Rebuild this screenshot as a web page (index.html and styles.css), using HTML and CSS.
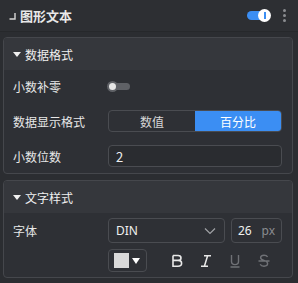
FILE: index.html
```html
<!DOCTYPE html>
<html>
<head>
<meta charset="utf-8">
<link rel="stylesheet" href="styles.css">
</head>
<body>
<div class="page">
  <div class="top">
    <svg class="corner" width="7" height="7" viewBox="0 0 7 7"><path d="M0.5 6 H6 V0" fill="none" stroke="#d8d8d8" stroke-width="1.4"/></svg>
    <span class="title">图形文本</span>
    <span class="spacer"></span>
    <span class="switch-on"><span class="knob"></span></span>
    <span class="dots"><i></i><i></i><i></i></span>
  </div>
  <div class="cards">
    <div class="card">
      <div class="card-head"><span class="caret"></span>数据格式</div>
      <div class="card-body">
        <div class="row">
          <span class="label">小数补零</span>
          <span class="switch-off"><span class="knob"></span></span>
        </div>
        <div class="row">
          <span class="label">数据显示格式</span>
          <div class="seg"><span class="seg-item">数值</span><span class="seg-item active">百分比</span></div>
        </div>
        <div class="row">
          <span class="label">小数位数</span>
          <div class="input">2</div>
        </div>
      </div>
    </div>
    <div class="card">
      <div class="card-head"><span class="caret"></span>文字样式</div>
      <div class="card-body body2">
        <div class="row row-font">
          <span class="label">字体</span>
          <div class="controls">
            <div class="select"><span>DIN</span>
              <svg width="12" height="8" viewBox="0 0 12 8"><path d="M1 1.5 L6 6.5 L11 1.5" fill="none" stroke="#a0a2a6" stroke-width="1.2"/></svg>
            </div>
            <div class="size"><span>26</span><span class="unit">px</span></div>
          </div>
        </div>
        <div class="row row-style">
          <span class="label"></span>
          <div class="controls">
            <div class="color"><span class="swatch"></span><span class="tri"></span></div>
            <div class="fmt">
              <svg width="14" height="16" viewBox="0 0 14 16"><path d="M3 2.5 H8 C10.3 2.5 11 3.6 11 5 C11 6.4 10 7.4 8 7.4 H3 M8 7.4 C10.6 7.4 11.6 8.6 11.6 10.3 C11.6 12 10.4 13.3 8 13.3 H3 V2.5" fill="none" stroke="#e8e8e8" stroke-width="1.6"/></svg>
              <svg width="14" height="16" viewBox="0 0 14 16"><path d="M5 2.8 H12 M2 13.2 H9 M8.6 2.8 L5.4 13.2" fill="none" stroke="#e8e8e8" stroke-width="1.5"/></svg>
              <svg width="14" height="16" viewBox="0 0 14 16"><path d="M3.5 2 V8.5 C3.5 10.6 5 11.6 7 11.6 C9 11.6 10.5 10.6 10.5 8.5 V2 M2.5 14 H11.5" fill="none" stroke="#6f7176" stroke-width="1.4"/></svg>
              <svg width="14" height="16" viewBox="0 0 14 16"><path d="M10.6 4 C10 2.8 8.8 2.2 7 2.2 C5 2.2 3.6 3.2 3.6 4.7 C3.6 6.4 5.2 6.9 7 7.4 C9 8 10.6 8.6 10.6 10.6 C10.6 12.3 9 13.2 7 13.2 C5 13.2 3.8 12.5 3.2 11.2 M1.5 8 H12.5" fill="none" stroke="#6f7176" stroke-width="1.4"/></svg>
            </div>
          </div>
        </div>
      </div>
    </div>
  </div>
</div>
</body>
</html>
```

FILE: styles.css
```css
* { box-sizing: border-box; }
html, body { margin: 0; padding: 0; }
body {
  background: #2b2d31;
  font-family: "Noto Sans CJK SC", "Noto Sans", sans-serif;
  color: #e6e6e6;
  font-size: 12px;
  width: 298px;
  height: 283px;
  overflow: hidden;
}
.top {
  height: 32px;
  display: flex;
  align-items: center;
  padding: 0 12px 0 9px;
  background: #2d2f33;
  border-bottom: 1px solid #26282b;
}
.corner { margin-right: 4px; margin-top: 2px; }
.title { font-size: 13px; font-weight: 600; color: #e8e8e8; }
.spacer { flex: 1; }
.switch-on {
  position: relative;
  width: 22px;
  height: 9px;
  border-radius: 5px;
  background: #3b8ef3;
  margin-right: 14px;
}
.switch-on .knob {
  position: absolute;
  right: -2px;
  top: -2px;
  width: 13px;
  height: 13px;
  border-radius: 50%;
  background: #fff;
}
.switch-on .knob::after {
  content: "";
  position: absolute;
  left: 6px;
  top: 3px;
  width: 1.5px;
  height: 7px;
  background: #3b8ef3;
}
.dots { display: flex; flex-direction: column; gap: 2px; }
.dots i { display: block; width: 3px; height: 3px; border-radius: 50%; background: #8a8c90; }
.cards {
  padding: 5px 5px 0 3px;
  display: flex;
  flex-direction: column;
  gap: 6px;
}
.card {
  border: 1px solid #45474c;
  border-radius: 4px;
  background: #2e3035;
  overflow: hidden;
}
.card-head {
  height: 32px;
  display: flex;
  align-items: center;
  padding-left: 9px;
  background: #35373c;
  font-size: 12px;
  color: #f0f0f0;
}
.caret {
  width: 0; height: 0;
  border-left: 4px solid transparent;
  border-right: 4px solid transparent;
  border-top: 5px solid #f0f0f0;
  margin-right: 4px;
}
.card-body {
  padding: 5px 10px 6px 9px;
  display: flex;
  flex-direction: column;
  gap: 13px;
}
.body2 { padding-top: 5px; gap: 6px; padding-bottom: 5px; }
.row {
  display: flex;
  align-items: center;
  height: 22px;
}
.label { width: 95px; flex: none; color: #e8e8e8; }
.row-font { height: 25px; }
.row-style { height: 23px; }
.switch-off {
  position: relative;
  width: 22px;
  height: 7px;
  border-radius: 4px;
  background: #5f6166;
}
.switch-off .knob {
  position: absolute;
  left: -1px;
  top: -2px;
  width: 11px;
  height: 11px;
  border-radius: 50%;
  background: #e6e6e6;
  border: 2px solid #5f6166;
}
.seg {
  flex: 1;
  display: flex;
  height: 22px;
  border: 1px solid #4a4c51;
  border-radius: 4px;
  overflow: hidden;
}
.seg-item {
  flex: 1;
  display: flex;
  align-items: center;
  justify-content: center;
  color: #d8d8d8;
}
.seg-item.active { background: #3b8ef3; color: #fff; }
.input {
  flex: 1;
  height: 22px;
  border: 1px solid #4a4c51;
  border-radius: 4px;
  background: #2a2c30;
  display: flex;
  align-items: center;
  padding-left: 7px;
  font-size: 13px;
  color: #f0f0f0;
}
.controls { flex: 1; display: flex; align-items: center; gap: 6px; height: 100%; }
.select {
  width: 117px;
  height: 100%;
  border: 1px solid #4a4c51;
  border-radius: 4px;
  display: flex;
  align-items: center;
  justify-content: space-between;
  padding: 0 8px 0 7px;
  font-family: "Noto Sans", sans-serif;
  font-size: 12px;
  color: #f0f0f0;
}
.size {
  flex: 1;
  height: 100%;
  border: 1px solid #4a4c51;
  border-radius: 4px;
  display: flex;
  align-items: center;
  justify-content: space-between;
  padding: 0 6px 0 6px;
  font-family: "Noto Sans", sans-serif;
  font-size: 12px;
  color: #f0f0f0;
}
.unit { color: #8a8c90; }
.color {
  width: 39px;
  height: 100%;
  border: 1px solid #4a4c51;
  border-radius: 4px;
  display: flex;
  align-items: center;
  padding-left: 5px;
  gap: 3px;
}
.swatch { width: 15px; height: 15px; background: #d9d9d9; }
.tri {
  width: 0; height: 0;
  border-left: 4.5px solid transparent;
  border-right: 4.5px solid transparent;
  border-top: 6px solid #ffffff;
}
.fmt {
  display: flex;
  align-items: center;
  gap: 15px;
  margin-left: 17px;
}
.fmt svg { display: block; }
```
